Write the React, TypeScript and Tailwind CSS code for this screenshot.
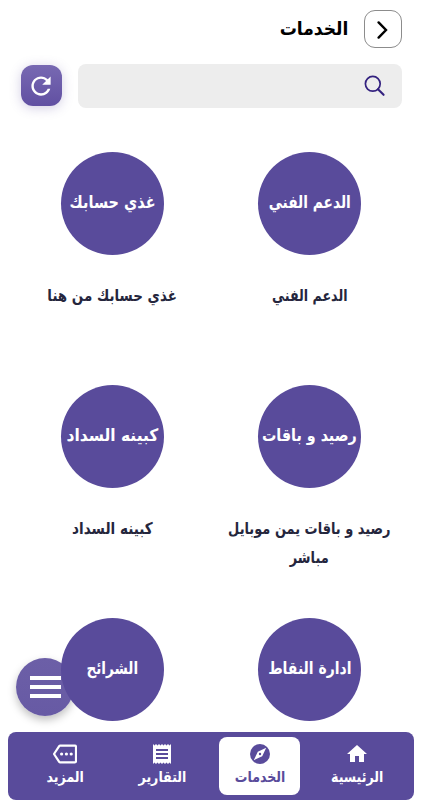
import { IoMdRefresh } from "react-icons/io";
import { MdHome, MdReceipt } from "react-icons/md";

function CompassIcon({ className }: { className?: string }) {
    return (
        <svg className={className} viewBox="0 0 24 24">
            <circle cx="12" cy="12" r="10" fill="currentColor" />
            <path d="M18.2 5.8l-4 8.4-8.4 4 4-8.4z" fill="white" />
            <circle cx="12" cy="12" r="1.2" fill="currentColor" />
        </svg>
    );
}

function MoreIcon({ className }: { className?: string }) {
    return (
        <svg className={className} viewBox="0 0 24 24">
            <path
                d="M7.2 3.6H21.8a1.2 1.2 0 0 1 1.2 1.2v14.4a1.2 1.2 0 0 1-1.2 1.2H7.2a1.2 1.2 0 0 1-1-.5L1 12l5.2-7.9a1.2 1.2 0 0 1 1-.5z"
                fill="none"
                stroke="currentColor"
                strokeWidth={2.2}
                strokeLinejoin="round"
            />
            <circle cx="8.6" cy="12" r="1.6" fill="currentColor" />
            <circle cx="13.4" cy="12" r="1.6" fill="currentColor" />
            <circle cx="18.2" cy="12" r="1.6" fill="currentColor" />
        </svg>
    );
}

const services = [
    { name: "الدعم الفني", nameScale: "scale-x-[0.81]", lines: ["الدعم الفني"], lineScale: "scale-x-[0.79]" },
    { name: "غذي حسابك", nameScale: "scale-x-[0.85]", lines: ["غذي حسابك من هنا"], lineScale: "scale-x-[0.84]" },
    { name: "رصيد و باقات", nameScale: "scale-x-[0.84]", lines: ["رصيد و باقات يمن موبايل", "مباشر"], lineScale: "scale-x-[0.81]" },
    { name: "كبينه السداد", nameScale: "scale-x-[0.91]", lines: ["كبينه السداد"], lineScale: "scale-x-[0.85]" },
    { name: "ادارة النقاط", nameScale: "scale-x-[0.82]", lines: [], lineScale: "" },
    { name: "الشرائح", nameScale: "scale-x-[0.8]", lines: [], lineScale: "" },
];

const tabs = [
    { label: "الرئيسية", icon: MdHome, active: false },
    { label: "الخدمات", icon: CompassIcon, active: true },
    { label: "التقارير", icon: MdReceipt, active: false },
    { label: "المزيد", icon: MoreIcon, active: false },
];

export default function App() {
    return (
        <div
            dir="rtl"
            className="relative flex h-[800px] w-[422px] flex-col overflow-hidden bg-white font-['DejaVu_Sans',sans-serif] font-bold"
        >
            {/* Header */}
            <header className="mt-[10px] flex h-[38px] items-center gap-4 px-5">
                <button className="flex size-[38px] items-center justify-center rounded-[11px] border border-[#8c8c8c] pt-px">
                    <svg className="h-5 w-3" fill="none" stroke="black" strokeWidth={2.4} strokeLinecap="round" viewBox="0 0 12 20">
                        <path d="M1.6 2.4L9 10l-7.4 7.6" />
                    </svg>
                </button>
                <h1 className="origin-right scale-x-[0.9] pb-0.5 text-[19px] leading-[36px] text-black">الخدمات</h1>
            </header>

            {/* Search */}
            <div className="mt-4 flex h-11 items-center gap-4 px-5">
                <div className="flex h-11 w-[324px] items-center rounded-lg bg-[#ededed] px-4">
                    <svg className="size-[23px]" fill="none" stroke="#33217f" viewBox="0 0 23 23">
                        <circle cx="9.8" cy="8.8" r="7.4" strokeWidth={1.7} />
                        <path d="M15 14.2l5.6 5.6" strokeWidth={2.1} strokeLinecap="round" />
                    </svg>
                </div>
                <button className="mb-px flex size-[41px] items-center justify-center rounded-[12px] bg-linear-to-b from-[#7869b2] to-[#6150a2] pr-px shadow-[0_2px_12px_#5a4b9b45]">
                    <IoMdRefresh className="size-7 text-white" />
                </button>
            </div>

            {/* Services */}
            <main className="relative z-10 mt-[44px] grid auto-rows-[233px] grid-cols-2 px-[14px]">
                {services.map((s) => (
                    <div key={s.name} className="flex flex-col items-center">
                        <div className="flex size-[103px] shrink-0 items-center justify-center rounded-full bg-[#594b9b] whitespace-nowrap text-white">
                            <span className={`-mt-px text-[17px] ${s.nameScale}`}>{s.name}</span>
                        </div>
                        <div className={`mt-[26px] text-center text-[16px] leading-[29px] whitespace-nowrap text-[#25263d] ${s.lineScale}`}>
                            {s.lines.map((line) => (
                                <p key={line}>{line}</p>
                            ))}
                        </div>
                    </div>
                ))}
            </main>

            {/* Floating menu */}
            <button className="absolute top-[658px] left-[16px] flex size-[58px] flex-col items-center justify-center gap-[5px] rounded-full bg-linear-to-b from-[#6c5fa7] to-[#675aa4] shadow-[0_4px_8px_#00000040]">
                <span className="h-[4px] w-[31px] bg-white" />
                <span className="h-[4px] w-[31px] bg-white" />
                <span className="h-[4px] w-[31px] bg-white" />
            </button>

            {/* Bottom navigation */}
            <nav className="absolute bottom-0 left-2 z-20 flex h-[68px] w-[406px] items-center justify-around rounded-[8px] bg-[#594b9b] px-2">
                {tabs.map(({ label, icon: Icon, active }) => (
                    <a
                        key={label}
                        className={`flex h-[58px] w-[81px] flex-col items-center rounded-[8px] pt-[5px] ${active ? "bg-white text-[#594b9b]" : "text-white"}`}
                    >
                        <Icon className="size-6" />
                        <span className="scale-x-[0.84] text-[15px] leading-[22px] whitespace-nowrap">{label}</span>
                    </a>
                ))}
            </nav>
        </div>
    );
}
